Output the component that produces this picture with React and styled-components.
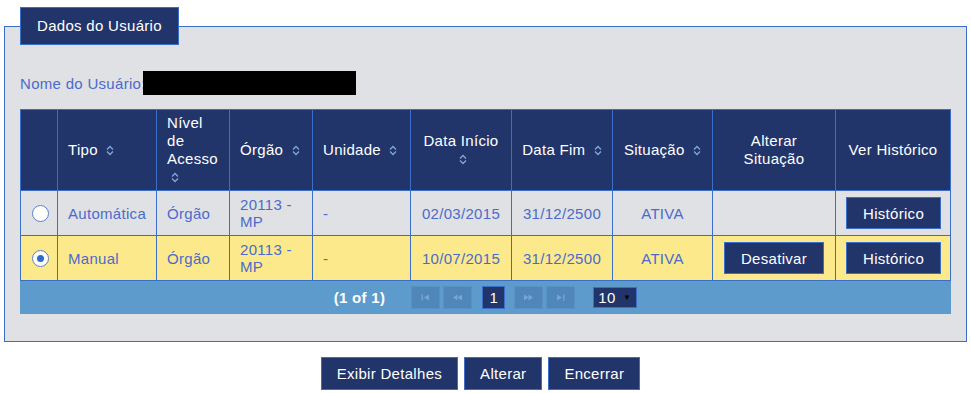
import React from 'react';
import styled, { createGlobalStyle } from 'styled-components';

const NAVY = '#22356a';
const BLUE = '#3a6ec7';

const Global = createGlobalStyle`
  html, body { margin: 0; padding: 0; background: #fff; }
  body {
    font-family: "Liberation Sans", Arial, sans-serif;
    font-size: 15px;
    letter-spacing: 0.3px;
  }
`;

const Page = styled.div`
  padding: 7px 4px 0;
`;

const Fieldset = styled.fieldset`
  margin: 0;
  padding: 0 15px 27px;
  border: 1px solid ${BLUE};
  background: #e0e1e5;
  min-width: 0;
`;

const Legend = styled.legend`
  margin: 0;
  padding: 9px 16px;
  background: ${NAVY};
  border: 1px solid ${BLUE};
  color: #fff;
  font-size: 15px;
  line-height: 18px;
`;

const NameRow = styled.div`
  display: flex;
  align-items: center;
  height: 24px;
  margin-top: 26px;
  color: #4b6bcb;
  line-height: 17px;
`;

const Redacted = styled.span`
  display: block;
  width: 213px;
  height: 24px;
  background: #000;
  margin-left: -3px;
`;

const Table = styled.table`
  width: 100%;
  border-collapse: collapse;
  table-layout: fixed;
  margin-top: 14px;
`;

const Col = styled.col`
  width: ${(p) => (p.$w ? `${p.$w}px` : 'auto')};
`;

const Th = styled.th`
  background: ${NAVY};
  color: #fff;
  font-weight: normal;
  border: 1px solid ${BLUE};
  padding: 4px 10px;
  line-height: 18px;
  text-align: ${(p) => p.$align || 'left'};
  vertical-align: middle;
`;

const Tr = styled.tr`
  background: ${(p) => (p.$selected ? '#fbe98b' : '#e0e1e5')};
`;

const Td = styled.td`
  height: 44px;
  padding: ${(p) => (p.$tight ? '0' : '0 10px')};
  border: 1px solid ${BLUE};
  color: #4b6bcb;
  line-height: 17px;
  text-align: ${(p) => p.$align || 'left'};
  vertical-align: middle;
`;

const SortSvg = styled.svg`
  display: inline-block;
  width: 8px;
  height: 11px;
  margin-left: 4px;
  vertical-align: -1px;
  fill: none;
  stroke: #82a8d8;
  stroke-width: 1.3;
`;

const Sort = () => (
  <SortSvg viewBox="0 0 8 11">
    <polyline points="1,4.5 4,1.5 7,4.5" />
    <polyline points="1,6.5 4,9.5 7,6.5" />
  </SortSvg>
);

const Radio = styled.span`
  display: inline-flex;
  align-items: center;
  justify-content: center;
  box-sizing: border-box;
  width: 17px;
  height: 17px;
  border-radius: 50%;
  background: #fff;
  border: 1px solid #5b7fca;
  vertical-align: middle;
  margin-left: 2px;
  &::after {
    content: '';
    display: ${(p) => (p.$checked ? 'block' : 'none')};
    width: 7px;
    height: 7px;
    border-radius: 50%;
    background: #2b6cc6;
  }
`;

const Button = styled.button`
  box-sizing: border-box;
  height: ${(p) => p.$h || 33}px;
  padding: 0 ${(p) => p.$px || 15}px;
  background: ${NAVY};
  border: 1px solid ${BLUE};
  color: #fff;
  font-family: "Liberation Sans", Arial, sans-serif;
  font-size: 15px;
  letter-spacing: 0.3px;
  line-height: 17px;
  cursor: pointer;
  vertical-align: middle;
`;

const Paginator = styled.div`
  display: flex;
  justify-content: center;
  align-items: center;
  height: 33px;
  background: #5c9bcc;
`;

const PageInfo = styled.span`
  color: #fff;
  font-weight: bold;
  margin-right: 26px;
`;

const PagerBtn = styled.span`
  box-sizing: border-box;
  display: flex;
  align-items: center;
  justify-content: center;
  width: ${(p) => (p.$active ? 23 : 29)}px;
  height: 23px;
  margin-left: ${(p) => p.$ml || 0}px;
  background: ${(p) => (p.$active ? NAVY : '#4f87ba')};
  border: 1px solid ${(p) => (p.$active ? BLUE : '#5a91c4')};
  color: #fff;
  font-size: 15px;
`;

const PagerIcon = styled.svg`
  width: 9px;
  height: 7px;
  fill: #7ba5d0;
`;

const RowsSelect = styled.span`
  box-sizing: border-box;
  display: flex;
  align-items: center;
  justify-content: space-between;
  width: 44px;
  height: 21px;
  margin-left: 18px;
  padding: 0 5px 0 4px;
  background: ${NAVY};
  border: 1px solid ${BLUE};
  color: #fff;
  font-size: 15px;
`;

const Caret = styled.span`
  font-size: 8px;
  color: #000;
`;

const ButtonBar = styled.div`
  display: flex;
  justify-content: center;
  gap: 6px;
  margin-top: 15px;
  padding-right: 10px;
`;

const icons = {
  first: (
    <>
      <rect x="0.5" y="0.5" width="1.4" height="6" />
      <polygon points="3,3.5 8,0.5 8,6.5" />
    </>
  ),
  prev: (
    <>
      <polygon points="0,3.5 4.5,0.5 4.5,6.5" />
      <polygon points="4.5,3.5 9,0.5 9,6.5" />
    </>
  ),
  next: (
    <>
      <polygon points="0,0.5 4.5,3.5 0,6.5" />
      <polygon points="4.5,0.5 9,3.5 4.5,6.5" />
    </>
  ),
  last: (
    <>
      <polygon points="1,0.5 6,3.5 1,6.5" />
      <rect x="7.1" y="0.5" width="1.4" height="6" />
    </>
  ),
};

const Icon = ({ name }) => <PagerIcon viewBox="0 0 9 7">{icons[name]}</PagerIcon>;

const headers = [
  { label: '', sort: false },
  { label: 'Tipo', sort: true },
  { label: 'Nível de Acesso', sort: true },
  { label: 'Órgão', sort: true },
  { label: 'Unidade', sort: true },
  { label: 'Data Início', sort: true, align: 'center' },
  { label: 'Data Fim', sort: true, align: 'center' },
  { label: 'Situação', sort: true, align: 'center' },
  { label: 'Alterar Situação', sort: false, align: 'center' },
  { label: 'Ver Histórico', sort: false, align: 'center' },
];

const widths = [37, 99, 73, 83, 98, 101, 101, 100, 123, null];

const rows = [
  {
    tipo: 'Automática', nivel: 'Órgão', orgao: '20113 - MP', unidade: '-',
    ini: '02/03/2015', fim: '31/12/2500', sit: 'ATIVA', action: null, selected: false,
  },
  {
    tipo: 'Manual', nivel: 'Órgão', orgao: '20113 - MP', unidade: '-',
    ini: '10/07/2015', fim: '31/12/2500', sit: 'ATIVA', action: 'Desativar', selected: true,
  },
];

export default function App() {
  return (
    <Page>
      <Global />
      <Fieldset>
        <Legend>Dados do Usuário</Legend>
        <NameRow>
          Nome do Usuário:
          <Redacted />
        </NameRow>
        <Table>
          <colgroup>
            {widths.map((w, i) => (
              <Col key={i} $w={w} />
            ))}
          </colgroup>
          <thead>
            <tr>
              {headers.map((h, i) => (
                <Th key={i} $align={h.align}>
                  {h.label}
                  {h.sort && (
                    <>
                      {' '}
                      <Sort />
                    </>
                  )}
                </Th>
              ))}
            </tr>
          </thead>
          <tbody>
            {rows.map((r, i) => (
              <Tr key={i} $selected={r.selected}>
                <Td $tight $align="center">
                  <Radio $checked={r.selected} />
                </Td>
                <Td>{r.tipo}</Td>
                <Td>{r.nivel}</Td>
                <Td>{r.orgao}</Td>
                <Td>{r.unidade}</Td>
                <Td $align="center">{r.ini}</Td>
                <Td $align="center">{r.fim}</Td>
                <Td $align="center">{r.sit}</Td>
                <Td $align="center">
                  {r.action && <Button $h={32} $px={16}>{r.action}</Button>}
                </Td>
                <Td $align="center">
                  <Button $h={32} $px={16}>Histórico</Button>
                </Td>
              </Tr>
            ))}
          </tbody>
        </Table>
        <Paginator>
          <PageInfo>(1 of 1)</PageInfo>
          <PagerBtn><Icon name="first" /></PagerBtn>
          <PagerBtn $ml={3}><Icon name="prev" /></PagerBtn>
          <PagerBtn $ml={10} $active>1</PagerBtn>
          <PagerBtn $ml={9}><Icon name="next" /></PagerBtn>
          <PagerBtn $ml={3}><Icon name="last" /></PagerBtn>
          <RowsSelect>
            10
            <Caret>▼</Caret>
          </RowsSelect>
        </Paginator>
      </Fieldset>
      <ButtonBar>
        <Button>Exibir Detalhes</Button>
        <Button>Alterar</Button>
        <Button>Encerrar</Button>
      </ButtonBar>
    </Page>
  );
}
